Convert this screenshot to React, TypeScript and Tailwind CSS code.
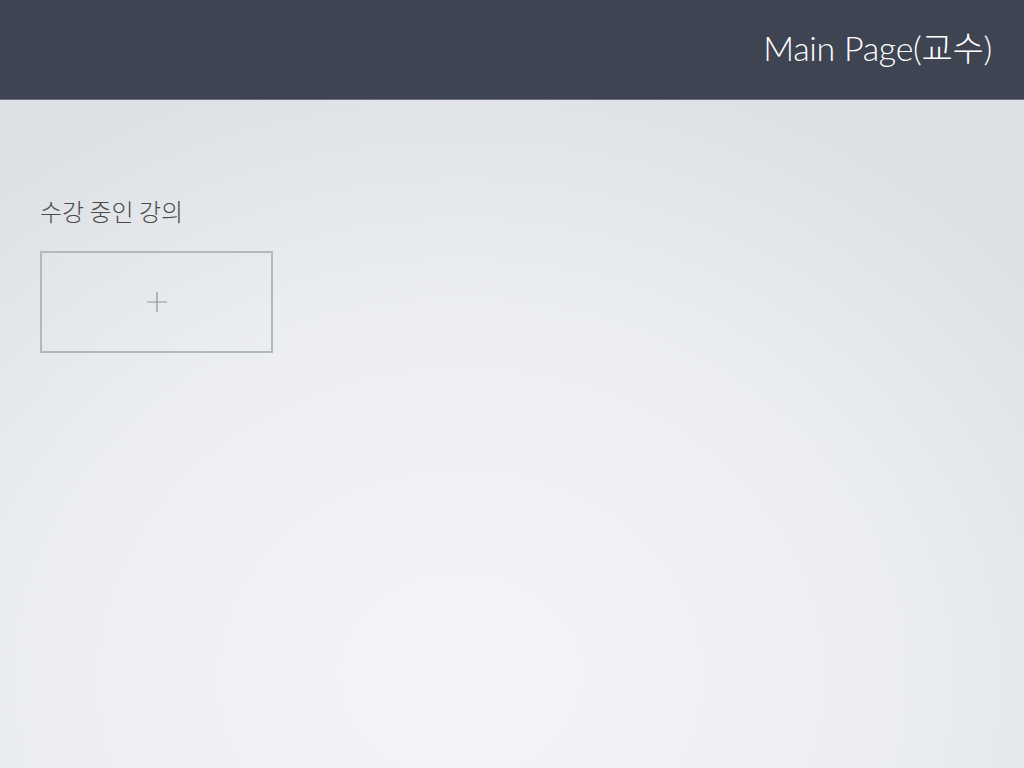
export default function App() {
  return (
    <div className="flex h-[768px] w-[1024px] flex-col overflow-hidden bg-[radial-gradient(ellipse_75%_85%_at_45%_88%,#f3f5f8_0%,#eceef2_55%,#dcdfe3_100%)] font-['Lato','Noto_Sans_CJK_KR',sans-serif]">
      <header className="flex h-[100px] shrink-0 items-center justify-end border-b border-[#6b7280] bg-[#3e4452] pr-[32px]">
        <h1 className="pb-[4px] text-[34px] font-light tracking-[-0.3px] text-white">
          Main Page(교수)
        </h1>
      </header>
      <main className="flex flex-col px-[40px] pt-[96px]">
        <h2 className="text-[24px] font-light leading-[30px] text-[#4b4b4b] font-['Noto_Sans_CJK_KR',sans-serif]">
          수강 중인 강의
        </h2>
        <button className="mt-[25px] flex h-[102px] w-[233px] items-center justify-center border-2 border-[#b4b7bb]">
          <svg width="22" height="22" viewBox="0 0 22 22" className="text-[#8e9196]">
            <path d="M11 1v20M1 11h20" stroke="currentColor" strokeWidth="1.2" />
          </svg>
        </button>
      </main>
    </div>
  );
}
